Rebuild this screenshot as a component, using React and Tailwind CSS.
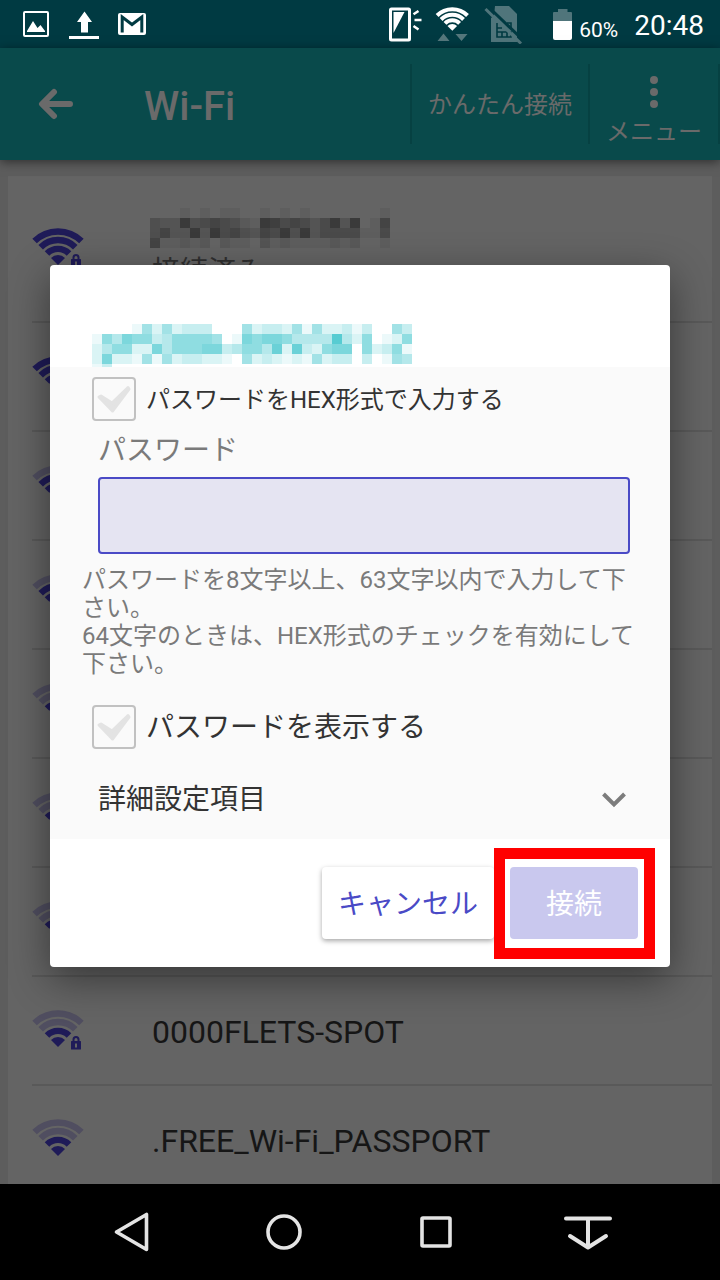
const NETWORKS = [
	{ level: 4, locked: true, masked: true, status: "接続済み" },
	{ level: 4, locked: true },
	{ level: 3, locked: true },
	{ level: 3, locked: true },
	{ level: 2, locked: true },
	{ level: 2, locked: true },
	{ level: 2, locked: true },
	{ level: 2, locked: true, name: "0000FLETS-SPOT" },
	{ level: 2, locked: false, name: ".FREE_Wi-Fi_PASSPORT" },
];

// one digit per tile, 0 is empty and 9 is the darkest
const MASK_CONNECTED = [
	"000101011001010100000001",
	"433845654218756535838016",
	"463383856436584835555115",
	"611212021103121111212001",
];

const MASK_SELECTED = [
	"00001525233300052332515223130053",
	"16476634666650176776444494260126",
	"24662274666773466482832677062361",
	"27221515233221052321215233030154",
	"13",
];

const Mosaic = ({ rows, height, color, strength, className }) => (
	<svg
		width={rows[0].length * 10}
		height={height}
		className={className}
		shapeRendering="crispEdges"
		role="img"
		aria-label="SSID"
	>
		{rows.map((row, y) =>
			[...row].map((n, x) => (
				<rect
					key={`${x}-${y}`}
					x={x * 10}
					y={y * 10}
					width="10"
					height="10"
					fill={color}
					fillOpacity={Number(n) * strength}
				/>
			))
		)}
	</svg>
);

const WifiIcon = ({ level, locked }) => {
	const tone = (n) => (level >= n ? "#1f1b58" : "#504e60");

	return (
		<svg width="52" height="40" viewBox="0 0 52 40" fill="none" strokeWidth="6.4" className="shrink-0">
			<path d="M2.6 13.1A33.2 33.2 0 0 1 49.4 13.1" stroke={tone(4)} />
			<path d="M8.7 19.2A24.5 24.5 0 0 1 43.3 19.2" stroke={tone(3)} />
			<path d="M15 25.5A15.5 15.5 0 0 1 37 25.5" stroke={tone(2)} />
			<path d="M26 37L19 30A9.8 9.8 0 0 1 33 30Z" fill={tone(1)} />
			{locked && (
				<>
					<path d="M41.5 32V29.5A2.5 2.5 0 0 1 46.5 29.5V32" stroke="#1f1b58" strokeWidth="2" />
					<rect x="39" y="31" width="10" height="8.5" rx="0.5" fill="#1f1b58" />
					<path d="M44 33.5V37.5" stroke="#646464" strokeWidth="2" />
				</>
			)}
		</svg>
	);
};

const StatusBar = () => (
	<header className="flex h-12 shrink-0 items-center bg-[#003a42] pl-5 pr-4 text-white">
		<div className="flex gap-4">
			<svg width="32" height="32" viewBox="0 0 32 32">
				<rect x="4" y="4" width="24" height="24" rx="1" fill="none" stroke="#fff" strokeWidth="2" />
				<path d="M7 24V23L13 13L17.5 20L20.5 17L25 23V24Z" fill="#fff" />
			</svg>
			<svg width="32" height="32" viewBox="0 0 32 32" fill="#fff">
				<path d="M16.5 3.5L24 14H20V24.5H13V14H9Z" />
				<rect x="1" y="28" width="30" height="3" />
			</svg>
			<svg width="32" height="32" viewBox="0 0 32 32">
				<rect x="2" y="5" width="28" height="22" rx="2" fill="#fff" />
				<path d="M6.2 24.5V9L16 16.5L25.8 9V24.5" fill="none" stroke="#003a42" strokeWidth="3" />
			</svg>
		</div>

		<div className="ml-auto mr-[30px] flex items-center gap-3">
			<svg width="36" height="36" viewBox="0 0 36 36" fill="none" stroke="#fff" strokeWidth="2.5">
				<rect x="3.5" y="3" width="19" height="31" rx="1" strokeWidth="3" />
				<path d="M6.5 6H17.5L6.5 27Z" fill="#fff" stroke="none" />
				<path d="M26.5 8.3L31.5 5M27.5 14H34.5M26.5 20L31.5 23.5" />
			</svg>
			<svg width="36" height="36" viewBox="0 0 36 36" fill="none" stroke="#fff" strokeWidth="4">
				<path d="M2.1 9.5A21.5 21.5 0 0 1 32.5 9.5" />
				<path d="M6.1 13.5A15.8 15.8 0 0 1 28.5 13.5" />
				<path d="M10 17.4A10.3 10.3 0 0 1 24.6 17.4" />
				<path d="M17.3 24.7L12.5 20A6.8 6.8 0 0 1 22.1 20Z" fill="#fff" stroke="none" />
				<path d="M2.5 35L8.5 27.5L14.5 35ZM20.5 28H32.5L26.5 35Z" fill="#55777c" stroke="none" />
			</svg>
			<svg width="40" height="40" viewBox="0 0 40 40" fill="none">
				<path d="M12 2H26L34 10V38H8V14L11 12Z" fill="#50757b" />
				<path d="M14 19V33H28V28H14M14 24H19M19 28V33M24 28V33M24 19H28V24" stroke="#003a42" strokeWidth="1.6" />
				<path d="M4.5 2L41 37" stroke="#003a42" strokeWidth="3" />
				<path d="M2.5 5L38 39.5" stroke="#50757b" strokeWidth="3" />
			</svg>
		</div>

		<div className="mr-4 flex items-center gap-1.5">
			<svg width="20" height="32" viewBox="0 0 20 32">
				<path d="M5 1H14.5V4H18Q19 4 19 5V13H0V5Q0 4 1 4H5Z" fill="#50757b" />
				<path d="M0 13H19V30Q19 32 17 32H2Q0 32 0 30Z" fill="#fff" />
			</svg>
			<span className="pt-3 text-[21px] leading-6">60%</span>
		</div>
		<time className="pt-1 text-[28px] leading-8">20:48</time>
	</header>
);

const AppBar = () => (
	<div className="relative z-10 flex h-28 shrink-0 items-center bg-[#094a4b] text-[#6a6a6a] shadow-[0_2px_10px_rgba(0,0,0,0.5)]">
		<button type="button" aria-label="戻る" className="ml-8 grid size-12 place-items-center">
			<svg width="36" height="32" viewBox="0 0 36 32" fill="none" stroke="#6a6a6a" strokeWidth="6" strokeLinecap="round" strokeLinejoin="round">
				<path d="M16 4L4 16L16 28M5 16H32" />
			</svg>
		</button>
		<h1 className="ml-16 pt-1.5 text-[40px] font-medium leading-12">Wi-Fi</h1>
		<button type="button" className="ml-auto h-20 border-l-2 border-[#064142] px-4 pt-0.5 text-2xl">
			かんたん接続
		</button>
		<button
			type="button"
			className="flex h-20 flex-col items-center border-x-2 border-[#064142] px-4 pt-3 text-2xl leading-6"
		>
			<svg width="8" height="32" viewBox="0 0 8 32" fill="#6a6a6a" className="shrink-0">
				<circle cx="4" cy="4" r="4" />
				<circle cx="4" cy="16" r="4" />
				<circle cx="4" cy="28" r="4" />
			</svg>
			<span className="mt-3">メニュー</span>
		</button>
	</div>
);

const NetworkList = () => (
	<div className="min-h-0 flex-1 overflow-hidden bg-[#5d5d5d] px-2 pt-4">
		<ul className="bg-[#646464] pl-6">
			{NETWORKS.map((net, i) => (
				<li
					key={i}
					className={`flex items-center gap-[66px] border-b-2 border-[#595959] pb-0.5 ${net.masked ? "h-[147px]" : "h-[109px]"}`}
				>
					<WifiIcon level={net.level} locked={net.locked} />
					<div>
						{net.masked && <Mosaic rows={MASK_CONNECTED} height={40} color="#000" strength={0.052} />}
						{net.name && <p className="pl-0.5 pt-1 text-[32px] leading-10 text-[#161616]">{net.name}</p>}
						{net.status && (
							<p className="h-10 pl-0.5 pt-1 text-[28px] leading-10 text-[#303030]">{net.status}</p>
						)}
					</div>
				</li>
			))}
		</ul>
	</div>
);

const CheckRow = ({ children, className }) => (
	<label className={`flex items-center gap-2.5 pl-[42px] text-[#333] ${className}`}>
		<span className="grid shrink-0">
			<input
				type="checkbox"
				className="col-start-1 row-start-1 size-11 appearance-none rounded border-2 border-[#c1c1c1] bg-[#fafafa]"
			/>
			<svg width="44" height="44" viewBox="0 0 44 44" className="pointer-events-none col-start-1 row-start-1">
				<path
					d="M7 20L9 19L20 26L36 10.5L37 12L20.5 34Z"
					fill="#e3e3e3"
					stroke="#e3e3e3"
					strokeWidth="3"
					strokeLinejoin="round"
				/>
			</svg>
		</span>
		<span className="pt-0.5">{children}</span>
	</label>
);

const ConnectDialog = () => (
	<form
		role="dialog"
		aria-modal="true"
		className="mx-[50px] flex-1 overflow-hidden rounded bg-white shadow-[0_12px_40px_rgba(0,0,0,0.45)]"
	>
		<h2 className="flex h-[102px] items-end pl-[42px]">
			<Mosaic rows={MASK_SELECTED} height={43} color="#45c6cd" strength={0.1} />
		</h2>

		<div className="bg-[#fafafa] pt-2.5">
			<CheckRow className="text-2xl">パスワードをHEX形式で入力する</CheckRow>

			<div className="mx-10 mt-2.5 pl-2">
				<label htmlFor="password" className="block text-[28px] leading-10 text-[#7a7a7a]">
					パスワード
				</label>
				<input
					id="password"
					type="password"
					className="mt-1.5 block h-[77px] w-full rounded border-2 border-[#4a4ac6] bg-[#e5e4f2] px-4 text-[28px] outline-none"
				/>
			</div>

			<p className="mt-3 pl-8 pr-8 text-2xl leading-7 text-[#7a7a7a]">
				パスワードを8文字以上、63文字以内で入力して下さい。
				<br />
				64文字のときは、HEX形式のチェックを有効にして下さい。
			</p>

			<CheckRow className="mt-[27px] text-[28px]">パスワードを表示する</CheckRow>

			<button
				type="button"
				className="mt-2.5 flex h-20 w-full items-center justify-between pl-12 pr-11 pt-0.5 text-[28px] text-[#333]"
			>
				詳細設定項目
				<svg width="24" height="16" viewBox="0 0 24 16" fill="none" stroke="#7c7c7c" strokeWidth="4">
					<path d="M1.5 2L12 12.5L22.5 2" />
				</svg>
			</button>
		</div>

		<div className="flex justify-end gap-4 py-7 pr-8 text-[28px]">
			<button
				type="button"
				className="h-[72px] rounded px-4 pt-1 text-[#4a4ac6] shadow-[0_2px_5px_rgba(0,0,0,0.35)]"
			>
				キャンセル
			</button>
			<div className="relative">
				<button type="submit" disabled className="h-[72px] w-32 rounded bg-[#c9c8ee] pt-1 text-white">
					接続
				</button>
				<div className="pointer-events-none absolute -bottom-5 -left-4 -right-[17px] -top-[19px] border-[11px] border-[#f00]"></div>
			</div>
		</div>
	</form>
);

const NavBar = () => (
	<nav className="grid h-24 shrink-0 grid-cols-4 bg-black px-14">
		<button type="button" aria-label="戻る" className="grid place-items-center">
			<svg width="40" height="40" viewBox="0 0 40 40" fill="none" stroke="#e4e4e4" strokeWidth="3.6" strokeLinejoin="round">
				<path d="M34.5 2.5V37.5L4.5 20Z" />
			</svg>
		</button>
		<button type="button" aria-label="ホーム" className="grid place-items-center">
			<svg width="40" height="40" viewBox="0 0 40 40" fill="none" stroke="#e4e4e4" strokeWidth="3.6">
				<circle cx="20" cy="20" r="16" />
			</svg>
		</button>
		<button type="button" aria-label="履歴" className="grid place-items-center">
			<svg width="40" height="40" viewBox="0 0 40 40" fill="none" stroke="#e4e4e4" strokeWidth="3.6">
				<rect x="6" y="6" width="28" height="28" rx="1" />
			</svg>
		</button>
		<button type="button" aria-label="通知パネル" className="grid place-items-center">
			<svg width="52" height="40" viewBox="0 0 52 40" fill="none" stroke="#e4e4e4" strokeWidth="4" strokeLinecap="round" strokeLinejoin="round">
				<path d="M4 6.5H48M26 6.5V35M8 24L26 35.5L44 24" />
			</svg>
		</button>
	</nav>
);

const App = () => {
	return (
		<div className="flex h-screen flex-col font-['Roboto','Noto_Sans_CJK_JP',sans-serif]">
			<StatusBar />
			<main className="relative flex min-h-0 flex-1 flex-col">
				<AppBar />
				<NetworkList />
				<div className="absolute inset-0 z-20 flex items-center">
					<ConnectDialog />
				</div>
			</main>
			<NavBar />
		</div>
	);
};

export default App;
